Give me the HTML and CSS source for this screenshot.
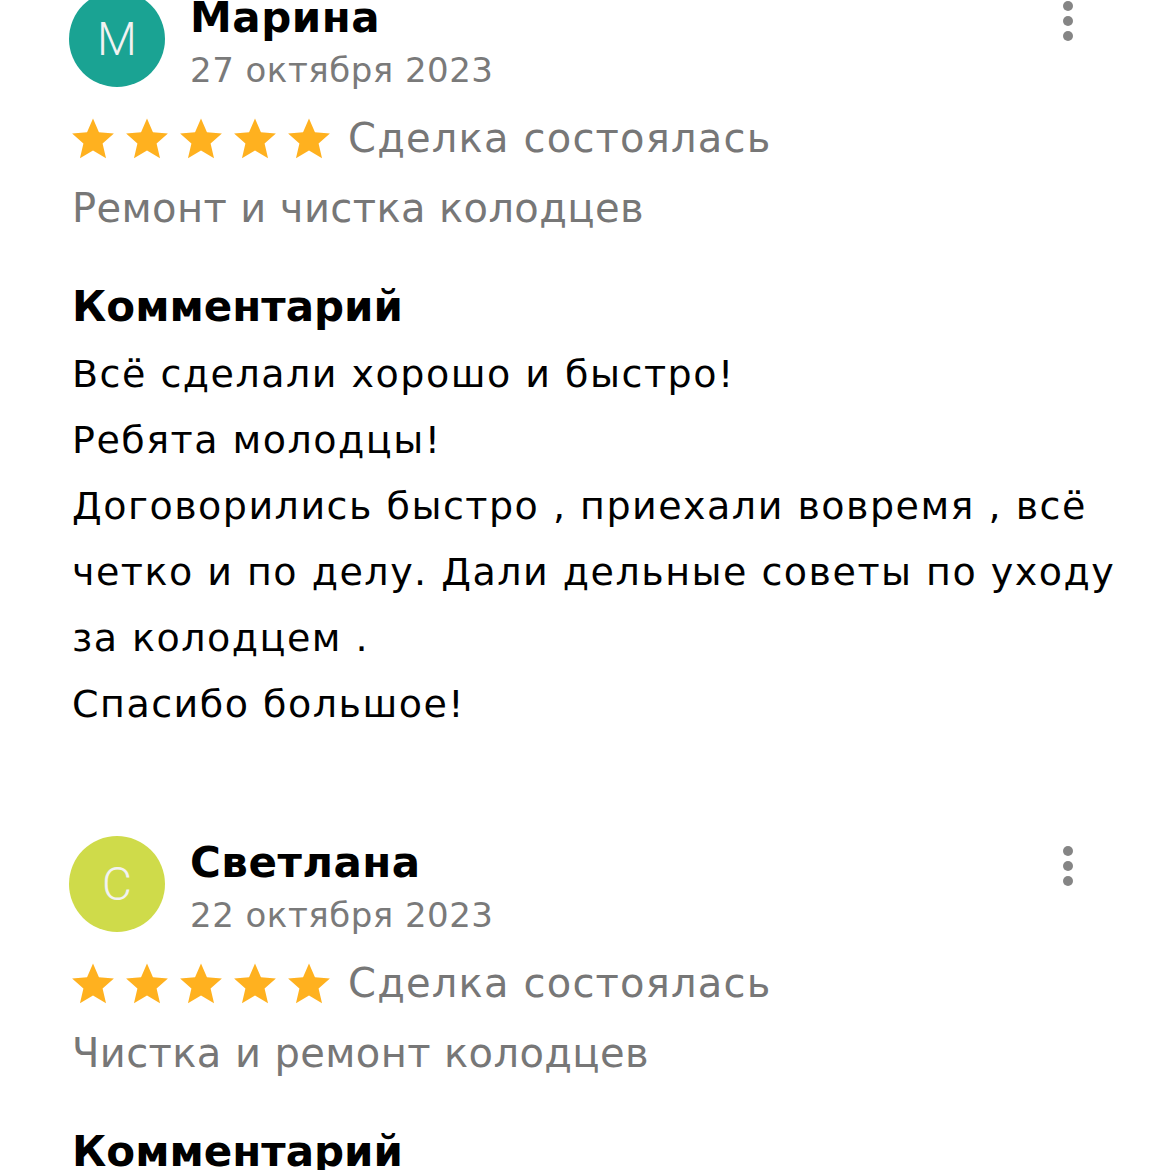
FILE: index.html
```html
<!DOCTYPE html>
<html lang="ru">
<head>
    <meta charset="UTF-8">
    <meta name="viewport" content="width=device-width, initial-scale=1.0">
    <title>Отзывы</title>
    <link rel="stylesheet" href="styles.css">
</head>
<body>
    <div class="list">
        <div class="review">
            <div class="head">
                <div class="avatar teal">М</div>
                <div class="who">
                    <div class="name">Марина</div>
                    <div class="date">27 октября 2023</div>
                </div>
                <div class="menu"><span></span><span></span><span></span></div>
            </div>
            <div class="rating">
                <div class="stars">
                    <svg viewBox="0 0 24 24"><path d="M12 1.8l3.1 7.2 7.8.7-5.9 5.2 1.8 7.6L12 18.5l-6.8 4 1.8-7.6-5.9-5.2 7.8-.7z"/></svg>
                    <svg viewBox="0 0 24 24"><path d="M12 1.8l3.1 7.2 7.8.7-5.9 5.2 1.8 7.6L12 18.5l-6.8 4 1.8-7.6-5.9-5.2 7.8-.7z"/></svg>
                    <svg viewBox="0 0 24 24"><path d="M12 1.8l3.1 7.2 7.8.7-5.9 5.2 1.8 7.6L12 18.5l-6.8 4 1.8-7.6-5.9-5.2 7.8-.7z"/></svg>
                    <svg viewBox="0 0 24 24"><path d="M12 1.8l3.1 7.2 7.8.7-5.9 5.2 1.8 7.6L12 18.5l-6.8 4 1.8-7.6-5.9-5.2 7.8-.7z"/></svg>
                    <svg viewBox="0 0 24 24"><path d="M12 1.8l3.1 7.2 7.8.7-5.9 5.2 1.8 7.6L12 18.5l-6.8 4 1.8-7.6-5.9-5.2 7.8-.7z"/></svg>
                </div>
                <span class="deal">Сделка состоялась</span>
            </div>
            <div class="service">Ремонт и чистка колодцев</div>
            <div class="title">Комментарий</div>
            <div class="text">Всё сделали хорошо и быстро!<br>Ребята молодцы!<br>Договорились быстро , приехали вовремя , всё четко и по делу. Дали дельные советы по уходу за колодцем .<br>Спасибо большое!</div>
        </div>
        <div class="review">
            <div class="head">
                <div class="avatar lime">С</div>
                <div class="who">
                    <div class="name">Светлана</div>
                    <div class="date">22 октября 2023</div>
                </div>
                <div class="menu"><span></span><span></span><span></span></div>
            </div>
            <div class="rating">
                <div class="stars">
                    <svg viewBox="0 0 24 24"><path d="M12 1.8l3.1 7.2 7.8.7-5.9 5.2 1.8 7.6L12 18.5l-6.8 4 1.8-7.6-5.9-5.2 7.8-.7z"/></svg>
                    <svg viewBox="0 0 24 24"><path d="M12 1.8l3.1 7.2 7.8.7-5.9 5.2 1.8 7.6L12 18.5l-6.8 4 1.8-7.6-5.9-5.2 7.8-.7z"/></svg>
                    <svg viewBox="0 0 24 24"><path d="M12 1.8l3.1 7.2 7.8.7-5.9 5.2 1.8 7.6L12 18.5l-6.8 4 1.8-7.6-5.9-5.2 7.8-.7z"/></svg>
                    <svg viewBox="0 0 24 24"><path d="M12 1.8l3.1 7.2 7.8.7-5.9 5.2 1.8 7.6L12 18.5l-6.8 4 1.8-7.6-5.9-5.2 7.8-.7z"/></svg>
                    <svg viewBox="0 0 24 24"><path d="M12 1.8l3.1 7.2 7.8.7-5.9 5.2 1.8 7.6L12 18.5l-6.8 4 1.8-7.6-5.9-5.2 7.8-.7z"/></svg>
                </div>
                <span class="deal">Сделка состоялась</span>
            </div>
            <div class="service">Чистка и ремонт колодцев</div>
            <div class="title">Комментарий</div>
        </div>
    </div>
</body>
</html>
```

FILE: styles.css
```css
body {
    margin: 0;
    background: #fff;
    font-family: "DejaVu Sans", "Liberation Sans", sans-serif;
    color: #000;
    overflow: hidden;
}
.list {
    margin-top: -9px; /* первый отзыв обрезан сверху */
    padding: 0 72px;
    display: flex;
    flex-direction: column;
    gap: 99px; /* расстояние между отзывами */
}
.review {
    display: flex;
    flex-direction: column;
}
.head {
    display: flex;
    align-items: flex-start;
    gap: 25px;
    margin-left: -3px;
}
.avatar {
    width: 96px;
    height: 96px;
    border-radius: 50%;
    flex: none;
    display: flex;
    align-items: center;
    justify-content: center;
    color: #f2f2f2;
    font-family: Roboto, sans-serif;
    font-size: 46px;
    font-weight: 300;
}
.teal { background: #1aa393; }
.lime { background: #cfdb4a; }
.who {
    flex: 1;
    display: flex;
    flex-direction: column;
}
.name {
    font-size: 42px;
    font-weight: 700;
    line-height: 54px;
    letter-spacing: 0.5px;
}
.date {
    font-size: 34px;
    line-height: 50px;
    color: #7a7a7a;
    letter-spacing: 0.5px;
}
.menu {
    display: flex;
    flex-direction: column;
    gap: 5px;
    padding-top: 10px;
    margin-right: 25px;
}
.menu span {
    width: 10px;
    height: 10px;
    border-radius: 50%;
    background: #858585;
}
.rating {
    display: flex;
    align-items: center;
    gap: 16px;
    margin-top: 15px;
    height: 56px;
}
.stars {
    display: flex;
    gap: 8px;
    margin-left: -2px;
}
.stars svg {
    width: 46px;
    height: 46px;
    fill: #ffb11f;
}
.deal {
    font-size: 40px;
    line-height: 56px;
    color: #777;
    letter-spacing: 1.2px;
}
.service {
    font-size: 40px;
    line-height: 56px;
    margin-top: 14px;
    color: #777;
    letter-spacing: 0.4px;
}
.title {
    margin-top: 43px;
    font-size: 42px;
    line-height: 56px;
    font-weight: 700;
}
.text {
    margin-top: 6px;
    margin-right: -24px; /* строки комментария чуть шире */
    font-size: 38px;
    line-height: 66px;
    letter-spacing: 1.5px;
}
```
